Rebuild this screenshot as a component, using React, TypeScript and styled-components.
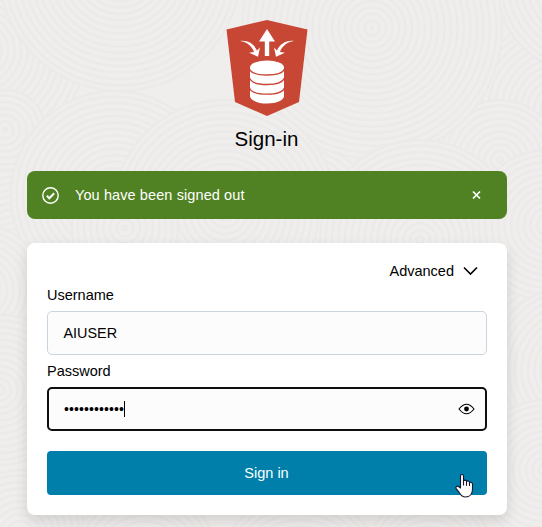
import React from 'react';
import styled, { createGlobalStyle } from 'styled-components';

const GlobalStyle = createGlobalStyle`
  * { box-sizing: border-box; }
  body { margin: 0; overflow: hidden; background: #efeeec; font-family: "Liberation Sans", Arial, sans-serif; font-size: 14.5px; line-height: 20px; color: #000; }
`;

const Page = styled.main`
  position: relative;
  width: 542px;
  height: 527px;
  padding: 20px 35px 0 27px;
  overflow: hidden;
  isolation: isolate;
`;

const Backdrop = styled.svg`
  position: absolute;
  inset: 0;
  z-index: -1;
`;

const Header = styled.header`
  display: flex;
  flex-direction: column;
  align-items: center;
  height: 151px;
`;

const Logo = styled.svg`
  display: block;
  width: 82px;
  height: 96px;
`;

const Title = styled.h1`
  margin: 9px 1px 0 0;
  font-size: 20.5px;
  line-height: 28px;
  font-weight: 400;
  color: #000;
`;

const Alert = styled.div`
  display: flex;
  align-items: center;
  height: 48px;
  padding: 0 25px 0 15px;
  border-radius: 8px;
  background: #508223;
  color: #fff;
`;

const AlertText = styled.span`
  flex: 1;
  margin-left: 16px;
  letter-spacing: 0.1px;
`;

const IconButton = styled.button`
  display: flex;
  padding: 0;
  border: 0;
  background: none;
  color: inherit;
`;

const Card = styled.form`
  height: 272px;
  margin-top: 24px;
  padding: 18px 20px 20px;
  border-radius: 8px;
  background: #fff;
  box-shadow: 0 6px 14px rgba(0, 0, 0, 0.13);
`;

const Advanced = styled.button`
  display: flex;
  align-items: center;
  gap: 9px;
  height: 20px;
  margin: 0 9px 0 auto;
  padding: 0;
  border: 0;
  background: none;
  color: #000;
  font: inherit;
`;

const Label = styled.label<{ $gap: number }>`
  display: block;
  height: 20px;
  margin: ${({ $gap }) => $gap}px 0 6px;
`;

const Field = styled.div<{ $focused?: boolean }>`
  display: flex;
  align-items: center;
  height: 44px;
  padding: ${({ $focused }) => ($focused ? '0 10px 0 15px' : '0 15px')};
  border: ${({ $focused }) => ($focused ? '2px solid #100f0e' : '1px solid #c9d4df')};
  border-radius: 5px;
  background: #fcfcfc;
  color: #000;
`;

const Value = styled.span`
  flex: 1;
  padding-left: 0.5px;
  font-size: 14.4px;
`;

const Secret = styled.span`
  font-size: 14px;
  letter-spacing: 0.1px;
`;

const Caret = styled.span`
  width: 1px;
  height: 16px;
  background: #000;
  margin-right: auto;
`;

const Submit = styled.button`
  display: block;
  width: 100%;
  height: 44px;
  margin-top: 20px;
  padding: 0 1px 0 0;
  border: 0;
  border-radius: 4px;
  background: #007fab;
  color: #fff;
  font: inherit;
`;

const Pointer = styled.svg`
  position: absolute;
  left: 455px;
  top: 473px;
`;

// Discs are painted in order, each one covering the rings underneath.
const discs: [number, number, number][] = [
  [-20, 50, 105], [560, 110, 90], [30, 300, 150], [540, 330, 150],
  [270, 260, 145], [5, 130, 40], [500, 160, 60], [590, -20, 95],
  [372, 28, 130], [115, 195, 104], [225, 212, 112],
  [120, -30, 121], [420, 240, 100], [548, 225, 75],
  [-20, 290, 65], [0, 390, 75], [575, 370, 85], [545, 470, 70],
  [20, 535, 65], [145, 565, 75], [300, 580, 85], [430, 560, 65],
  [125, 228, 53],
];

const RingBackdrop = () => (
  <Backdrop width="542" height="527" aria-hidden="true">
    {discs.map(([cx, cy, r], d) => (
      <g key={d} fill="none" stroke="#ebeae9" strokeWidth="2.4">
        <circle cx={cx} cy={cy} r={r} fill="#efeeed" />
        {Array.from({ length: Math.floor(r / 6.5) }, (_, i) => (
          <circle key={i} cx={cx} cy={cy} r={r - (i + 1) * 6.5 + 1} />
        ))}
      </g>
    ))}
  </Backdrop>
);

const AppLogo = () => (
  <Logo viewBox="0 0 82 96" aria-hidden="true">
    <path d="M41 0 81.5 9.5 73 82 41 96 9 82 .5 9.5Z" fill="#c74634" />
    <g fill="#fff">
      <path d="M41 9 49 21.5H43.2V36H38.8V21.5H33Z" />
      <path d="M14 21C22 20 28 24 31 30.5L34 27.5 32 36.7 23 32.7 28 32C26 26 21 22 14 21Z" />
      <path d="M68 21C60 20 54 24 51 30.5L48 27.5 50 36.7 59 32.7 54 32C56 26 61 22 68 21Z" />
      <path d="M24 48V76C24 80 31 83.5 41 83.5S58 80 58 76V48Z" />
      <ellipse cx="41" cy="47.5" rx="17" ry="7" />
    </g>
    <g fill="none" stroke="#c74634" strokeWidth="1.3">
      <path d="M23.5 49C25 53 32 55 41 55S57 53 58.5 49" />
      <path d="M23.5 58C25 62 32 64.5 41 64.5S57 62 58.5 58" />
      <path d="M23.5 68C25 72 32 74.2 41 74.2S57 72 58.5 68" />
    </g>
  </Logo>
);

export default function App() {
  return (
    <Page>
      <GlobalStyle />
      <RingBackdrop />
      <Header>
        <AppLogo />
        <Title>Sign-in</Title>
      </Header>
      <Alert role="status">
        <svg width="17" height="17" viewBox="0 0 17 17" fill="none" stroke="#fff">
          <circle cx="8.5" cy="8.5" r="7.7" strokeWidth="1.4" />
          <path d="m4.8 8.8 2.5 2.5 4.9-5" strokeWidth="2" />
        </svg>
        <AlertText>You have been signed out</AlertText>
        <IconButton type="button" aria-label="Close">
          <svg width="11" height="10" viewBox="0 0 11 10" fill="none" stroke="currentColor" strokeWidth="1.7">
            <path d="m2 1.5 7 7M9 1.5l-7 7" />
          </svg>
        </IconButton>
      </Alert>
      <Card>
        <Advanced type="button">
          Advanced
          <svg width="15" height="10" viewBox="0 0 15 10" fill="none" stroke="currentColor" strokeWidth="1.6">
            <path d="m1 1.5 6.5 6.5L14 1.5" />
          </svg>
        </Advanced>
        <Label $gap={4}>Username</Label>
        <Field><Value>AIUSER</Value></Field>
        <Label $gap={6}>Password</Label>
        <Field $focused>
          <Secret>••••••••••••</Secret>
          <Caret />
          <IconButton type="button" aria-label="Show password">
            <svg width="17" height="12" viewBox="0 0 17 12" fill="none" stroke="currentColor" strokeWidth="1.1">
              <path d="M1 6Q8.5-3.6 16 6Q8.5 15.6 1 6Z" />
              <circle cx="8.5" cy="6" r="2.4" fill="currentColor" stroke="none" />
            </svg>
          </IconButton>
        </Field>
        <Submit type="button">Sign in</Submit>
      </Card>
      <Pointer width="19" height="26" viewBox="0 0 19 26" fill="#fff" stroke="#15152a" strokeWidth="1.1" strokeLinejoin="round" aria-hidden="true">
        <path d="M5.5 15V3C5.5 1 8.5 1 8.5 3V8C9.5 6.6 11.3 7 11.5 8.5C12.7 7.4 14.3 8 14.5 9.5C15.8 8.8 17.5 9.6 17.5 11.3V16C17.5 21 14.5 24 10.5 24C7 24 5.7 22 4.3 19.7L1.2 15.6C.2 14 2.2 12.5 3.5 13.5Z" />
        <path d="M8.5 7.5V12.5M11.5 8.5V12.8M14.5 9.5V13" />
      </Pointer>
    </Page>
  );
}
